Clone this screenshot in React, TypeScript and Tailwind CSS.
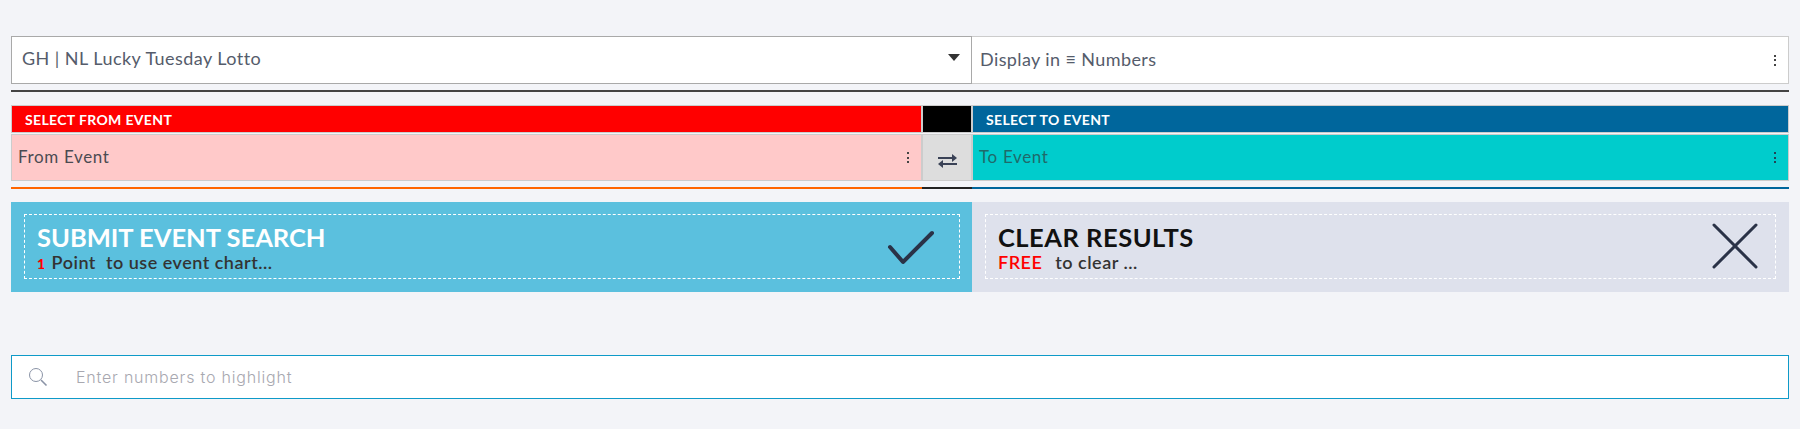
import React from 'react';

const Dots: React.FC<{ color?: string }> = ({ color = 'bg-[#444]' }) => (
  <span className="flex flex-col gap-[2.5px] shrink-0">
    <span className={`block w-[2px] h-[2px] ${color}`}></span>
    <span className={`block w-[2px] h-[2px] ${color}`}></span>
    <span className={`block w-[2px] h-[2px] ${color}`}></span>
  </span>
);

export default function App() {
  return (
    <div className="h-[429px] bg-[#f3f4f8] px-[11px] pt-[36px] font-['Lato',sans-serif]">
      {/* Game + display selects */}
      <div className="flex h-[48px]">
        <div className="w-[961px] border border-[#a9a9a9] bg-white flex items-center justify-between pl-[10px] pr-[11px]">
          <span className="text-[18px] text-[#555c6b] tracking-[0.45px] -mt-[3px]">GH | NL Lucky Tuesday Lotto</span>
          <span className="w-0 h-0 border-x-[6.5px] border-x-transparent border-t-[7px] border-t-[#333] -mt-[5px]"></span>
        </div>
        <div className="flex-1 border border-[#cccccc] border-l-0 bg-white flex items-center justify-between pl-[8px] pr-[12px]">
          <span className="text-[18px] text-[#555c6b] tracking-[0.4px] -mt-[1px]">Display in ≡ Numbers</span>
          <Dots />
        </div>
      </div>

      <div className="h-[2px] mt-[6px] bg-[#444]"></div>

      {/* From / swap / to */}
      <div className="flex mt-[13px] h-[76px]">
        <div className="w-[911px] flex flex-col">
          <div className="h-[28px] bg-[#ff0000] border border-[#cccccc] flex items-center pl-[13px] text-white text-[14px] font-bold tracking-[0.35px]">SELECT FROM EVENT</div>
          <div className="h-[47px] mt-[1px] bg-[#ffc9c9] border border-[#cccccc] flex items-center justify-between pl-[6px] pr-[12px]">
            <span className="text-[17px] text-[#4b4b52] tracking-[0.65px] -mt-[2px]">From Event</span>
            <Dots />
          </div>
        </div>
        <div className="w-[50px] flex flex-col">
          <div className="h-[28px] bg-black border border-[#cccccc]"></div>
          <div className="h-[47px] mt-[1px] bg-[#dddddd] border border-[#cccccc] flex items-center justify-center pt-[6px]">
            <svg width="19" height="14" viewBox="0 0 19 14" fill="#3a4256">
              <path d="M0 3h14V0l5 4-5 4V5H0z" />
              <path d="M19 9H5V6l-5 4 5 4v-3h14z" />
            </svg>
          </div>
        </div>
        <div className="flex-1 flex flex-col">
          <div className="h-[28px] bg-[#00669c] border border-[#cccccc] flex items-center pl-[13px] text-white text-[14px] font-bold tracking-[0.35px]">SELECT TO EVENT</div>
          <div className="h-[47px] mt-[1px] bg-[#00cccc] border border-[#cccccc] flex items-center justify-between pl-[6px] pr-[12px]">
            <span className="text-[17px] text-[#1f6a6a] tracking-[0.65px] -mt-[2px]">To Event</span>
            <Dots color="bg-[#245]" />
          </div>
        </div>
      </div>

      <div className="flex h-[2px] mt-[6px]">
        <div className="w-[911px] bg-[#ff6600]"></div>
        <div className="w-[50px] bg-[#222222]"></div>
        <div className="flex-1 bg-[#00669c]"></div>
      </div>

      {/* Action buttons */}
      <div className="flex mt-[13px] h-[90px]">
        <div className="w-[961px] bg-[#5bc0de] pl-[13px] pr-[12px] pt-[12px]">
          <div className="h-[65px] border border-dashed border-white flex items-center justify-between pl-[12px] pr-[24px]">
            <div className="flex flex-col pt-[2px]">
              <span className="text-[25.5px] leading-[30px] font-bold text-white">SUBMIT EVENT SEARCH</span>
              <span className="text-[18px] leading-[21px] font-semibold text-[#333333] tracking-[0.5px]">
                <span className="text-[14px] text-[#ff0000] font-black mr-[1px]">1</span> Point&nbsp; to use event chart...
              </span>
            </div>
            <svg width="50" height="38" viewBox="0 0 50 38" fill="none" stroke="#2a3247" strokeWidth="4" strokeLinecap="round" strokeLinejoin="round">
              <path d="M5 19l13 15L47 5" />
            </svg>
          </div>
        </div>
        <div className="flex-1 bg-[#dee1ec] px-[13px] pt-[12px]">
          <div className="h-[65px] border border-dashed border-white flex items-center justify-between pl-[12px] pr-[17px]">
            <div className="flex flex-col pt-[2px]">
              <span className="text-[25.5px] leading-[30px] font-bold text-[#111111] tracking-[0.5px]">CLEAR RESULTS</span>
              <span className="text-[18px] leading-[21px] font-semibold text-[#333333] tracking-[0.5px]">
                <span className="text-[#ff0000] mr-[-2px]">FREE</span>&nbsp;&nbsp; to clear ...
              </span>
            </div>
            <svg className="-mt-[1px]" width="46" height="46" viewBox="0 0 46 46" fill="none" stroke="#2a3247" strokeWidth="3" strokeLinecap="round">
              <path d="M2 2l42 42M44 2L2 44" />
            </svg>
          </div>
        </div>
      </div>

      {/* Highlight search */}
      <div className="mt-[63px] h-[44px] border border-[#0e9ac8] bg-white flex items-center pl-[16px]">
        <svg width="20" height="20" viewBox="0 0 20 20" fill="none" stroke="#8a93a6" strokeWidth="1">
          <circle cx="8" cy="8" r="6.5" />
          <path d="M13 13l5.500 5.500" strokeWidth="1.6" />
        </svg>
        <span className="ml-[28px] font-['Inter',sans-serif] font-light text-[16px] text-[#a8a8b0] tracking-[0.8px] -mt-[1px]">Enter numbers to highlight</span>
      </div>
    </div>
  );
}
